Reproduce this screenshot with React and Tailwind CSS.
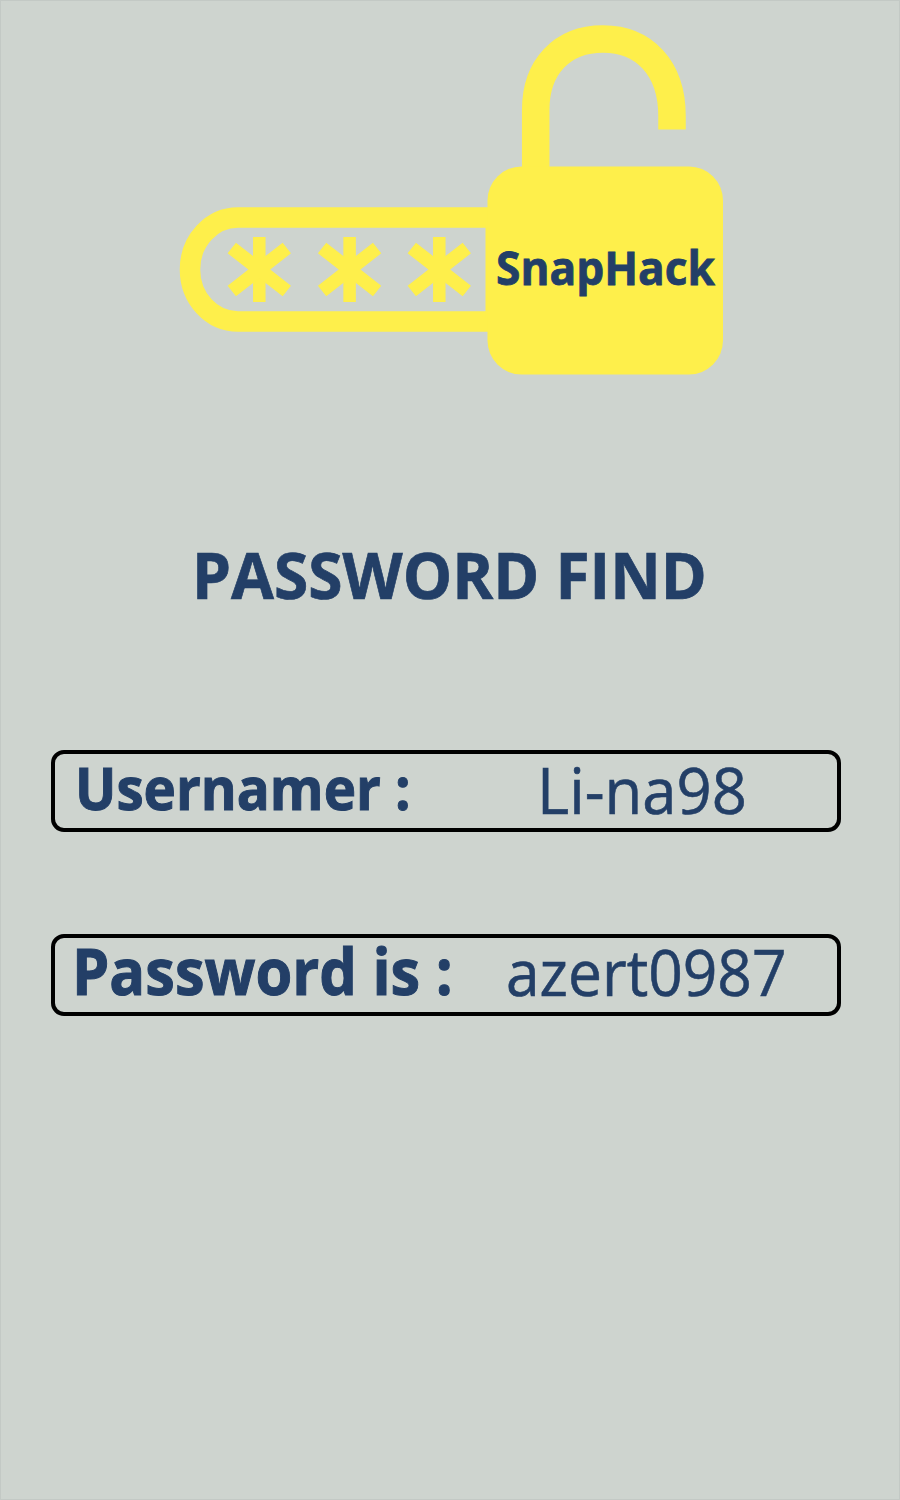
const YELLOW = '#feef4b';

// center x of each star in the password pill
const stars = [259.3, 349.6, 439.3];

function Star({ x }) {
  return (
    <g transform={`translate(${x} 269.5)`} stroke={YELLOW} fill="none">
      <path d="M0 -32.5V32.5" strokeWidth="12.5" />
      <path d="M-27.5 -21.5L27.5 21.5M27.5 -21.5L-27.5 21.5" strokeWidth="13.5" />
    </g>
  );
}

function Logo() {
  return (
    <svg width="900" height="400" viewBox="0 0 900 400" className="block shrink-0">
      {/* Password pill */}
      <path d="M492 217.5H238a48 52 0 0 0 0 104H492" fill="none" stroke={YELLOW} strokeWidth="20.5" />
      {stars.map((x) => (
        <Star key={x} x={x} />
      ))}

      {/* Padlock */}
      <path
        d="M535.7 172V110C535.7 67 562 39 603 39C644 39 672 68 672 116V129.5"
        fill="none"
        stroke={YELLOW}
        strokeWidth="27.5"
      />
      <rect x="485.5" y="220" width="10" height="98" fill={YELLOW} />
      <rect x="487.5" y="166.5" width="235.5" height="208" rx="34" fill={YELLOW} />
      <text
        x="496"
        y="285"
        textLength="219"
        lengthAdjust="spacingAndGlyphs"
        fontSize="47"
        strokeWidth="0.8"
        className="fill-[#233f67] stroke-[#233f67] font-bold"
      >
        SnapHack
      </text>
    </svg>
  );
}

function Field({ children }) {
  return (
    <div className="flex h-[82px] w-[790px] items-start rounded-[13px] border-4 border-black">
      {children}
    </div>
  );
}

export default function App() {
  return (
    <div className="flex h-[1500px] w-[900px] flex-col overflow-hidden border border-[#c3c9c5] bg-[#ced4cf] font-['Open_Sans','Noto_Sans',sans-serif] text-[#233f67]">
      <div className="-mx-px -mt-px">
        <Logo />
      </div>

      <h1 className="mt-[135px] ml-[191px] w-[520px] text-[64px] leading-[80px] font-bold whitespace-nowrap">
        <span className="inline-block origin-left scale-x-[0.972] [-webkit-text-stroke:0.7px_#233f67]">
          PASSWORD FIND
        </span>
      </h1>

      <div className="mt-[135px] ml-[50px] flex flex-col gap-[102px]">
        <Field>
          <span className="ml-[20px] w-[462px] shrink-0 origin-left scale-x-[0.928] text-[59px] leading-[66px] font-bold whitespace-nowrap [-webkit-text-stroke:1px_#233f67]">
            Usernamer :
          </span>
          <span className="origin-left scale-x-[0.962] text-[64px] leading-[72px] whitespace-nowrap [-webkit-text-stroke:0.6px_#233f67]">
            Li-na98
          </span>
        </Field>
        <Field>
          <span className="ml-[17px] w-[434px] shrink-0 origin-left scale-x-[0.93] text-[64px] leading-[66px] font-bold whitespace-nowrap [-webkit-text-stroke:1px_#233f67]">
            Password is :
          </span>
          <span className="origin-left scale-x-[0.945] text-[64px] leading-[67px] whitespace-nowrap [-webkit-text-stroke:0.6px_#233f67]">
            azert0987
          </span>
        </Field>
      </div>
    </div>
  );
}
